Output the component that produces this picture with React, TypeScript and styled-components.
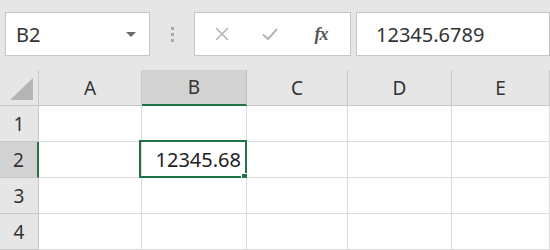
import React from "react";
import styled, { createGlobalStyle } from "styled-components";

const GlobalStyle = createGlobalStyle`
  html, body { margin: 0; padding: 0; background: #fff; }
  body { font-family: "Noto Sans", "Noto Sans CJK JP", sans-serif; }
`;

const Page = styled.div`
  width: 550px;
  height: 250px;
  overflow: hidden;
  background: #fff;
`;

const FormulaBar = styled.div`
  height: 70px;
  box-sizing: border-box;
  padding: 12px 0 0 5px;
  background: #e6e6e6;
  display: flex;
  align-items: flex-start;
`;

const Box = styled.div<{ $w?: number }>`
  height: 44px;
  box-sizing: border-box;
  border: 1px solid #c6c6c6;
  background: #fff;
  display: flex;
  align-items: center;
  ${(p) => (p.$w ? `width: ${p.$w}px;` : "flex: 1;")}
`;

const NameText = styled.span`
  flex: 1;
  padding-left: 10px;
  font-size: 20px;
  color: #333;
`;

const Caret = styled.span`
  width: 0;
  height: 0;
  margin-right: 13px;
  border-left: 5px solid transparent;
  border-right: 5px solid transparent;
  border-top: 5px solid #6b6b6b;
`;

const Grip = styled.div`
  width: 44px;
  height: 44px;
  display: flex;
  flex-direction: column;
  align-items: center;
  justify-content: center;
  gap: 3px;
`;

const Dot = styled.span`
  width: 3px;
  height: 3px;
  background: #a8a8a8;
`;

const IconSlot = styled.span<{ $w: number }>`
  width: ${(p) => p.$w}px;
  display: flex;
  justify-content: center;
  align-items: center;
`;

const Fx = styled.span`
  font-family: "Liberation Serif", serif;
  font-style: italic;
  font-weight: bold;
  font-size: 18px;
  color: #555;
  letter-spacing: -1px;
`;

const FormulaText = styled.span`
  padding-left: 19px;
  font-size: 20px;
  color: #333;
`;

const Sheet = styled.div`
  display: grid;
  grid-template-columns: 39px 103px 105px 101px 104px 1fr;
  grid-auto-rows: 36px;
`;

const Cell = styled.div<{ $head?: boolean; $sel?: boolean; $align?: "center" | "right" }>`
  position: relative;
  box-sizing: border-box;
  border-right: 1px solid ${(p) => (p.$head ? "#c8c8c8" : "#dadada")};
  border-bottom: 1px solid ${(p) => (p.$head ? "#c8c8c8" : "#dadada")};
  background: ${(p) => (p.$sel ? "#d2d2d2" : p.$head ? "#e6e6e6" : "#fff")};
  display: flex;
  align-items: center;
  justify-content: ${(p) => (p.$align === "right" ? "flex-end" : "center")};
  font-size: ${(p) => (p.$head ? 19 : 20)}px;
  color: ${(p) => (p.$head ? "#333" : "#222")};
`;

const ColHead = styled(Cell)`
  ${(p) => p.$sel && "border-bottom: 2px solid #217346; border-right-color: #bdbdbd;"}
`;

const RowHead = styled(Cell)`
  ${(p) => p.$sel && "border-right: 2px solid #217346;"}
`;

const Value = styled.span`
  padding-right: 5px;
  position: relative;
  z-index: 1;
`;

const Selection = styled.div`
  position: absolute;
  left: -3px;
  top: -2px;
  right: -1px;
  bottom: -1px;
  border: 2px solid #217346;
  pointer-events: none;
`;

const Handle = styled.span`
  position: absolute;
  right: -4px;
  bottom: -5px;
  width: 6px;
  height: 6px;
  background: #217346;
  border: 1px solid #fff;
`;

const cols = ["A", "B", "C", "D", "E"];
const rows = [1, 2, 3, 4];

export default function App() {
  return (
    <Page>
      <GlobalStyle />
      <FormulaBar>
        <Box $w={145}>
          <NameText>B2</NameText>
          <Caret />
        </Box>
        <Grip>
          <Dot />
          <Dot />
          <Dot />
        </Grip>
        <Box $w={157}>
          <IconSlot $w={53}>
            <svg width="16" height="16" viewBox="0 0 16 16">
              <path d="M2 2 L14 14 M14 2 L2 14" stroke="#b5b5b5" strokeWidth="1.6" fill="none" />
            </svg>
          </IconSlot>
          <IconSlot $w={44}>
            <svg width="18" height="16" viewBox="0 0 18 16">
              <path d="M2 8.5 L7 13 L16 3" stroke="#b5b5b5" strokeWidth="2" fill="none" />
            </svg>
          </IconSlot>
          <IconSlot $w={58}>
            <Fx>fx</Fx>
          </IconSlot>
        </Box>
        <Box style={{ marginLeft: 5 }}>
          <FormulaText>12345.6789</FormulaText>
        </Box>
      </FormulaBar>
      <Sheet>
        <Cell $head>
          <svg width="39" height="36" viewBox="0 0 39 36" style={{ position: "absolute", left: 0, top: 0 }}>
            <polygon points="10,30 33,30 33,8" fill="#b4b4b4" />
          </svg>
        </Cell>
        {cols.map((c) => (
          <ColHead key={c} $head $sel={c === "B"}>
            {c}
          </ColHead>
        ))}
        {rows.map((r) => (
          <React.Fragment key={r}>
            <RowHead $head $sel={r === 2}>
              {r}
            </RowHead>
            {cols.map((c) =>
              r === 2 && c === "B" ? (
                <Cell key={c} $align="right">
                  <Value>12345.68</Value>
                  <Selection>
                    <Handle />
                  </Selection>
                </Cell>
              ) : (
                <Cell key={c} />
              )
            )}
          </React.Fragment>
        ))}
      </Sheet>
    </Page>
  );
}
